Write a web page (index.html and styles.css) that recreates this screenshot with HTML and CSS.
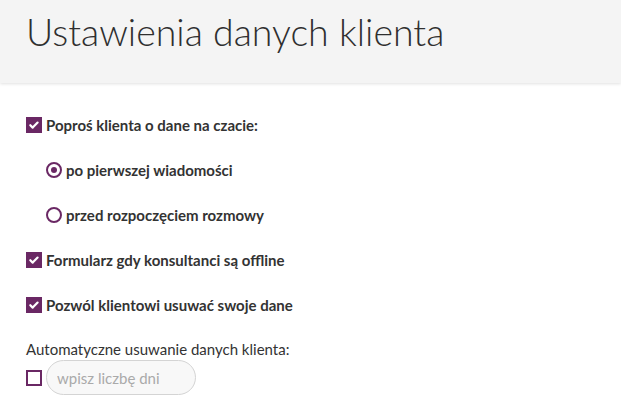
FILE: index.html
```html
<!DOCTYPE html>
<html lang="pl">
<head>
<meta charset="utf-8">
<title>Ustawienia danych klienta</title>
<link rel="stylesheet" href="styles.css">
</head>
<body>
<header class="header">
  <h1 class="title">Ustawienia danych klienta</h1>
</header>
<main class="content">
  <label class="row">
    <span class="check checked"><svg viewBox="0 0 16 16" width="16" height="16"><path d="M4.3 8.2l2.4 2.4 4.9-5" fill="none" stroke="#fff" stroke-width="2.2" stroke-linecap="round" stroke-linejoin="round"/></svg></span>
    <span class="label">Poproś klienta o dane na czacie:</span>
  </label>
  <label class="row sub">
    <span class="radio checked"></span>
    <span class="label">po pierwszej wiadomości</span>
  </label>
  <label class="row sub">
    <span class="radio"></span>
    <span class="label">przed rozpoczęciem rozmowy</span>
  </label>
  <label class="row">
    <span class="check checked"><svg viewBox="0 0 16 16" width="16" height="16"><path d="M4.3 8.2l2.4 2.4 4.9-5" fill="none" stroke="#fff" stroke-width="2.2" stroke-linecap="round" stroke-linejoin="round"/></svg></span>
    <span class="label">Formularz gdy konsultanci są offline</span>
  </label>
  <label class="row">
    <span class="check checked"><svg viewBox="0 0 16 16" width="16" height="16"><path d="M4.3 8.2l2.4 2.4 4.9-5" fill="none" stroke="#fff" stroke-width="2.2" stroke-linecap="round" stroke-linejoin="round"/></svg></span>
    <span class="label">Pozwól klientowi usuwać swoje dane</span>
  </label>
  <div class="auto">
    <div class="auto-label">Automatyczne usuwanie danych klienta:</div>
    <div class="auto-row">
      <span class="check"></span>
      <input class="days" type="text" placeholder="wpisz liczbę dni">
    </div>
  </div>
</main>
</body>
</html>
```

FILE: styles.css
```css
* { box-sizing: border-box; }
html, body { margin: 0; padding: 0; background: #fff; }
body {
  font-family: Lato, "Liberation Sans", sans-serif;
  color: #333;
  width: 621px;
  height: 414px;
  overflow: hidden;
}
.header {
  height: 83px;
  background: #f4f4f4;
  box-shadow: 0 1px 3px rgba(0,0,0,0.12);
  padding: 8px 0 0 26px;
}
.title {
  margin: 0;
  font-weight: 300;
  font-size: 37.5px;
  line-height: 48px;
  color: #2f2f2f;
}
.content {
  padding: 19px 0 0 26px;
}
.row {
  display: flex;
  align-items: center;
  height: 45px;
  gap: 4px;
  font-weight: 700;
  font-size: 15px;
}
.row.sub { padding-left: 20px; }
.label { line-height: 20px; color: #333; }
.check {
  width: 16px;
  height: 16px;
  flex: none;
  border: 2px solid #6a2864;
  background: #fff;
  display: inline-flex;
}
.check.checked { background: #6a2864; border: none; }
.radio {
  width: 16px;
  height: 16px;
  flex: none;
  border-radius: 50%;
  border: 2px solid #6a2864;
  background: #fff;
  position: relative;
}
.radio.checked::after {
  content: "";
  position: absolute;
  left: 3px; top: 3px;
  width: 6px; height: 6px;
  border-radius: 50%;
  background: #6a2864;
}
.auto { padding-top: 12px; }
.auto-label {
  font-size: 15px;
  line-height: 20px;
  color: #333;
}
.auto-row {
  display: flex;
  align-items: center;
  gap: 4px;
  margin-top: 1px;
}
.days {
  width: 150px;
  height: 35px;
  border: 1px solid #d4d4d4;
  border-radius: 18px;
  background: #f8f8f8;
  font-family: Lato, "Liberation Sans", sans-serif;
  font-size: 15px;
  padding: 0 10px;
  color: #333;
  outline: none;
}
.days::placeholder { color: #aaa; }
```
